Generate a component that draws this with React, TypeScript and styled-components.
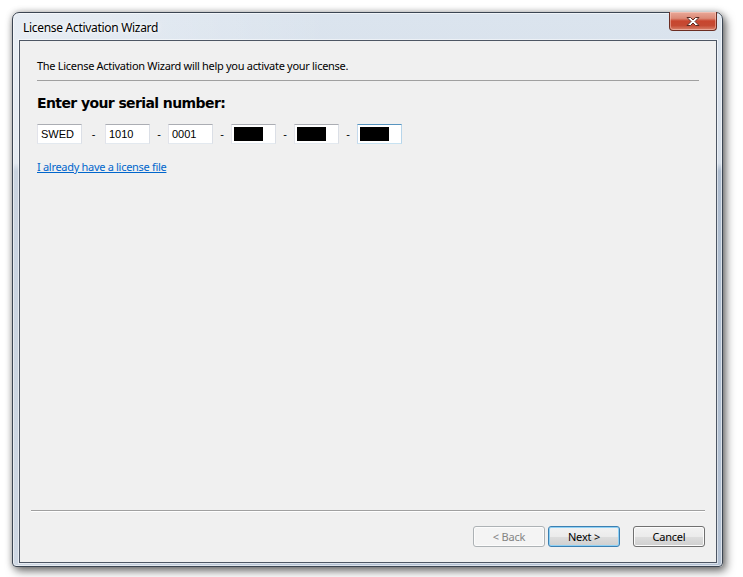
import styled, { createGlobalStyle } from "styled-components";

const GlobalStyle = createGlobalStyle`
  html, body {
    margin: 0;
    padding: 0;
    background: #ffffff;
  }
  body {
    font-family: "Noto Sans", "Liberation Sans", sans-serif;
    width: 743px;
    height: 577px;
    overflow: hidden;
  }
`;

const serial: { value?: string; masked?: boolean; focused?: boolean }[] = [
  { value: "SWED" },
  { value: "1010" },
  { value: "0001" },
  { masked: true },
  { masked: true },
  { masked: true, focused: true },
];

const App = () => {
  return (
    <>
      <GlobalStyle />
      <Window>
        <TitleBar>
          <Title>License Activation Wizard</Title>
          <CloseButton aria-label="Close">
            <svg width="16" height="11" viewBox="0 0 16 11">
              <path
                d="M2 1.5 H5.5 L8 4 L10.5 1.5 H14 L10 5.5 L14 9.5 H10.5 L8 7 L5.5 9.5 H2 L6 5.5 Z"
                fill="#ffffff"
                stroke="#5a2a22"
                strokeWidth="1"
                strokeLinejoin="round"
              />
            </svg>
          </CloseButton>
        </TitleBar>

        <Client>
          <Body>
            <Intro>The License Activation Wizard will help you activate your license.</Intro>
            <Rule />
            <Heading>Enter your serial number:</Heading>

            <SerialRow>
              {serial.map((part, i) => (
                <SerialPart key={i}>
                  {i > 0 && <Dash $width={i === 1 ? 23 : 18}>-</Dash>}
                  <Field $focused={part.focused}>
                    {part.masked ? <Mask /> : part.value}
                  </Field>
                </SerialPart>
              ))}
            </SerialRow>

            <LicenseLink href="#">I already have a license file</LicenseLink>
          </Body>

          <Footer>
            <FooterRule />
            <ButtonRow>
              <Button disabled>&lt; Back</Button>
              <Button $primary>Next &gt;</Button>
              <Button $gap={13}>Cancel</Button>
            </ButtonRow>
          </Footer>
        </Client>
      </Window>
    </>
  );
};

const Window = styled.div`
  box-sizing: border-box;
  margin: 12px 0 0 12px;
  width: 711px;
  height: 555px;
  display: flex;
  flex-direction: column;

  border: 1px solid #3b4552;
  border-radius: 7px 7px 4px 4px;
  padding: 0 5px 3px 6px;

  background:
    linear-gradient(90deg, rgba(255, 255, 255, 0.35) 0%, rgba(255, 255, 255, 0) 45%),
    linear-gradient(180deg, #dbe4ee 0px, #d6dfea 150px, #aebdd0 158px, #b4c2d4 100%);
  box-shadow:
    3px 4px 10px rgba(0, 0, 0, 0.55),
    0 0 6px rgba(0, 0, 0, 0.25),
    inset 0 0 0 1px rgba(255, 255, 255, 0.55);
`;

const TitleBar = styled.div`
  height: 27px;
  display: flex;
  justify-content: space-between;
  align-items: flex-start;
  padding-left: 4px;
`;

const Title = styled.div`
  margin-top: 6px;
  font-size: 12px;
  color: #000000;
  text-shadow: 0 0 6px #ffffff, 0 0 3px #ffffff;
  letter-spacing: -0.3px;
`;

const CloseButton = styled.div`
  box-sizing: border-box;
  margin-top: -1px;
  width: 48px;
  height: 19px;
  display: flex;
  align-items: center;
  justify-content: center;

  border: 1px solid #6b2d22;
  border-top: none;
  border-radius: 0 0 4px 4px;
  background: linear-gradient(
    180deg,
    #e9a898 0%,
    #dc8a77 35%,
    #c8452e 50%,
    #c54a33 75%,
    #d9826c 100%
  );
  box-shadow: inset 0 0 0 1px rgba(255, 220, 210, 0.45);
`;

const Client = styled.div`
  flex: 1;
  display: flex;
  flex-direction: column;
  background: #f0f0f0;
  border: 1px solid #4d5664;
  box-shadow: 0 0 0 1px rgba(255, 255, 255, 0.5);
`;

const Body = styled.div`
  flex: 1;
  padding: 17px 17px 0 17px;
  display: flex;
  flex-direction: column;
  align-items: flex-start;
`;

const Intro = styled.div`
  font-size: 11px;
  line-height: 15px;
  letter-spacing: -0.3px;
  color: #000000;
`;

const Rule = styled.div`
  align-self: stretch;
  height: 1px;
  margin-top: 7px;
  background: #a0a0a0;
`;

const Heading = styled.div`
  margin-top: 13px;
  font-family: "DejaVu Sans", "Liberation Sans", sans-serif;
  font-weight: bold;
  font-size: 14px;
  line-height: 18px;
  letter-spacing: -0.6px;
  color: #000000;
`;

const SerialRow = styled.div`
  margin-top: 12px;
  display: flex;
  align-items: center;
`;

const SerialPart = styled.div`
  display: flex;
  align-items: center;
`;

const Dash = styled.span<{ $width: number }>`
  width: ${(p) => p.$width}px;
  text-align: center;
  font-family: "Liberation Sans", sans-serif;
  font-size: 11px;
  color: #000000;
`;

const Field = styled.div<{ $focused?: boolean }>`
  box-sizing: border-box;
  width: 45px;
  height: 20px;
  padding: 2px 3px;
  display: flex;
  align-items: center;
  background: #ffffff;
  font-family: "Liberation Sans", sans-serif;
  font-size: 11px;
  color: #000000;
  border: 1px solid;
  border-color: ${(p) =>
    p.$focused
      ? "#5794bf #b7d5ea #c7e2f1 #c5daed"
      : "#abadb3 #dbdfe6 #e3e9ef #e2e3ea"};
`;

const Mask = styled.span`
  width: 29px;
  height: 14px;
  margin-left: -1px;
  background: #000000;
`;

const LicenseLink = styled.a`
  margin-top: 15px;
  font-size: 11px;
  letter-spacing: -0.3px;
  color: #0066cc;
  text-decoration: underline;
`;

const Footer = styled.div`
  padding: 0 11px 15px 11px;
`;

const FooterRule = styled.div`
  height: 1px;
  background: #a0a0a0;
  box-shadow: 0 1px 0 #ffffff;
`;

const ButtonRow = styled.div`
  margin-top: 15px;
  display: flex;
  justify-content: flex-end;
  gap: 3px;
`;

const Button = styled.button<{ $primary?: boolean; $gap?: number }>`
  box-sizing: border-box;
  width: 72px;
  height: 21px;
  margin-left: ${(p) => (p.$gap ? p.$gap - 3 : 0)}px;
  padding: 0;
  font-family: "Noto Sans", "Liberation Sans", sans-serif;
  font-size: 11px;
  letter-spacing: -0.2px;
  color: #000000;
  border-radius: 3px;
  border: 1px solid ${(p) => (p.$primary ? "#3c7fb1" : "#707070")};
  background: linear-gradient(180deg, #f2f2f2 0%, #ebebeb 50%, #dddddd 51%, #cfcfcf 100%);
  box-shadow: inset 0 0 0 1px ${(p) => (p.$primary ? "#8fd1f5" : "#fcfcfc")};

  &:disabled {
    border-color: #adb2b5;
    background: #f4f4f4;
    color: #838383;
    box-shadow: inset 0 0 0 1px #fcfcfc;
  }
`;

export default App;
